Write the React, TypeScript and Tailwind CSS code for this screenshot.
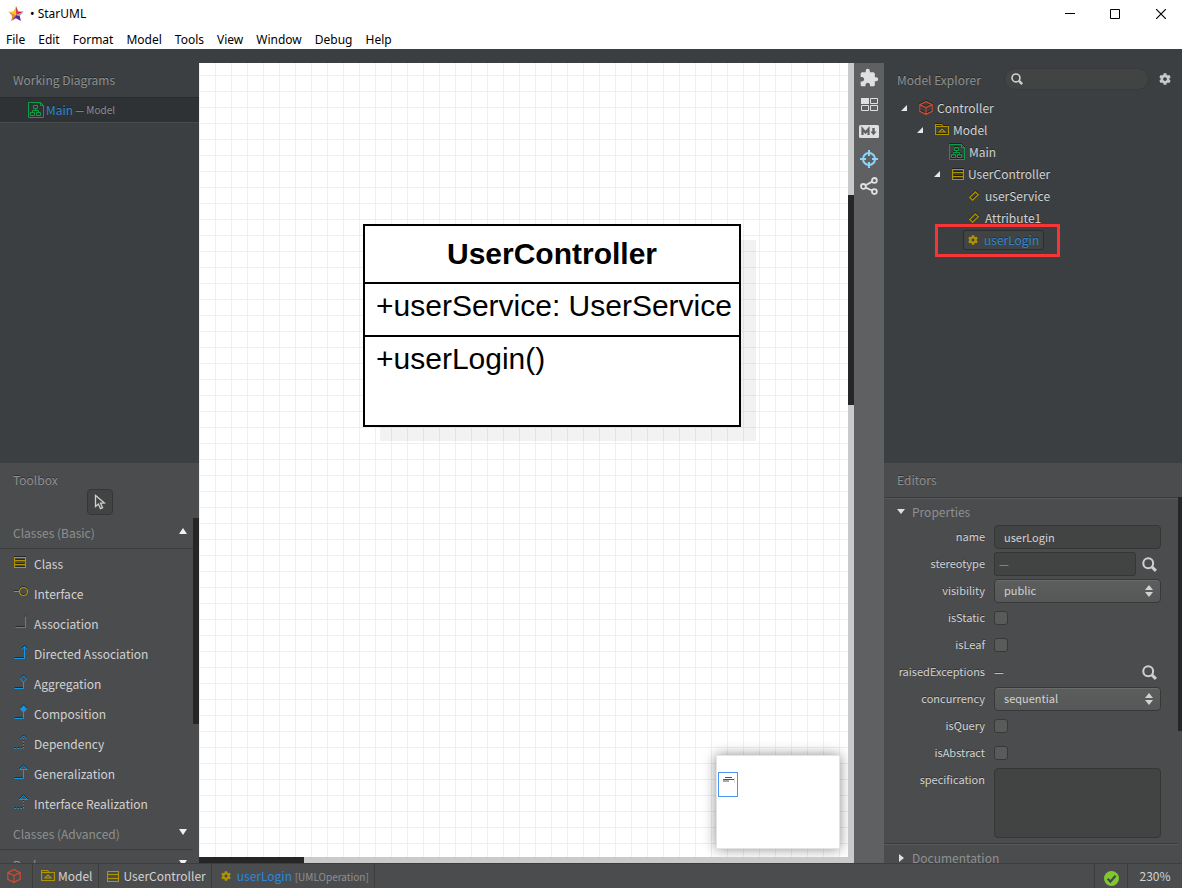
import { ReactNode, useState } from "react";
import { FaCog } from "react-icons/fa";
import { MdExtension } from "react-icons/md";

const menus = [
  "File",
  "Edit",
  "Format",
  "Model",
  "Tools",
  "View",
  "Window",
  "Debug",
  "Help",
];

const Logo = () => (
  <svg width="16" height="16" viewBox="0 0 16 16">
    <path d="M8 0 L8 9 L0.5 5.8 L5.6 5.4 Z" fill="#fcc21b" />
    <path d="M0.5 5.8 L8 9 L3.2 15 L4.2 10 Z" fill="#f08a1c" />
    <path d="M8 0 L10.4 5.4 L8 9 Z" fill="#d8433a" />
    <path d="M10.4 5.4 L15.6 5.8 L8 9 Z" fill="#c2183c" />
    <path d="M15.6 5.8 L11.8 10 L8 9 Z" fill="#a9a3a8" />
    <path d="M11.8 10 L12.8 15 L8 12.2 L8 9 Z" fill="#4b2aa0" />
    <path d="M8 9 L8 12.2 L3.2 15 Z" fill="#6a3fb5" />
  </svg>
);

const DiagramIcon = () => (
  <svg
    width="16"
    height="16"
    viewBox="0 0 16 16"
    fill="none"
    stroke="#0e9c46"
    className="shrink-0"
  >
    <path d="M0.5 0.5 H12.5 L15.5 3.5 V15.5 H0.5 Z M12.5 0.5 V3.5 H15.5" />
    <path d="M5.5 3.5 H9.5 V6.5 H5.5 Z M2.5 10.5 H6.5 V13.5 H2.5 Z M8.5 10.5 H12.5 V13.5 H8.5 Z M7.5 6.5 V8.5 M4.5 10.5 V8.5 H10.5 V10.5" />
  </svg>
);

const ProjectIcon = () => (
  <svg
    width="14"
    height="14"
    viewBox="0 0 14 14"
    fill="none"
    stroke="#cf4a30"
    strokeWidth="1.2"
    className="shrink-0"
  >
    <path d="M7 0.6 L13.2 3.6 V10.4 L7 13.4 L0.8 10.4 V3.6 Z M0.8 3.6 L7 6.6 L13.2 3.6 M7 6.6 V13.4" />
  </svg>
);

const PackageIcon = () => (
  <svg
    width="14"
    height="12"
    viewBox="0 0 14 12"
    fill="none"
    stroke="#b09500"
    strokeWidth="1.2"
    className="shrink-0"
  >
    <path d="M0.5 10.5 V0.5 H6.5 L8 2.5 H13.5 V10.5 Z M0.5 2.5 H8" />
    <path d="M4 8 L7 5 L10 8 Z" />
  </svg>
);

const ClassIcon = () => (
  <svg
    width="12"
    height="11"
    viewBox="0 0 12 11"
    fill="none"
    stroke="#b09500"
    strokeWidth="1.2"
    className="shrink-0"
  >
    <path d="M0.5 0.5 H11.5 V10.5 H0.5 Z M0.5 3.5 H11.5 M0.5 7.5 H11.5" />
  </svg>
);

const AttributeIcon = () => (
  <svg
    width="10"
    height="10"
    viewBox="0 0 10 10"
    fill="none"
    stroke="#b09500"
    strokeWidth="1.2"
    className="shrink-0"
  >
    <path d="M6.4 0.8 L9.2 3.6 L3.6 9.2 L0.8 6.4 Z" />
  </svg>
);

const OperationIcon = () => (
  <FaCog size={10} color="#b09500" className="shrink-0" />
);

const SearchIcon = ({ size }: { size: number }) => (
  <svg
    width={size}
    height={size}
    viewBox="0 0 14 14"
    fill="none"
    stroke="#d0d0d0"
    className="shrink-0"
  >
    <circle cx="5.8" cy="5.8" r="4.6" strokeWidth="1.9" />
    <path d="M9.3 9.3 L13 13" strokeWidth="2.8" />
  </svg>
);

const Edge = ({ dashed, children }: { dashed?: boolean; children?: ReactNode }) => (
  <svg width="14" height="14" viewBox="0 0 14 14" fill="none" stroke="#1697e0">
    <path
      d="M0.5 13.5 H9.5 V3"
      strokeDasharray={dashed ? "1.5 1.5" : undefined}
    />
    {children}
  </svg>
);

const tools = [
  { name: "Class", icon: <ClassIcon /> },
  {
    name: "Interface",
    icon: (
      <svg width="14" height="14" viewBox="0 0 14 14" fill="none" stroke="#b09500">
        <circle cx="9.5" cy="6.5" r="4" strokeWidth="1.2" />
        <path d="M0 6.5 H5.5" />
      </svg>
    ),
  },
  {
    name: "Association",
    icon: (
      <svg width="14" height="14" viewBox="0 0 14 14" fill="none" stroke="#1697e0">
        <path d="M1.5 12.5 H11.5 V1.5" />
      </svg>
    ),
  },
  {
    name: "Directed Association",
    icon: (
      <svg width="14" height="14" viewBox="0 0 14 14" fill="none" stroke="#1697e0">
        <path d="M0.5 13.5 H10.5 V1.5 M7.5 4.5 L10.5 1.5 L13.5 4.5" />
      </svg>
    ),
  },
  {
    name: "Aggregation",
    icon: (
      <Edge>
        <path d="M9.5 0.7 L12.5 4 L9.5 7.3 L6.5 4 Z" fill="#4b4c4e" />
      </Edge>
    ),
  },
  {
    name: "Composition",
    icon: (
      <Edge>
        <path d="M9.5 0.7 L12.5 4 L9.5 7.3 L6.5 4 Z" fill="#1697e0" />
      </Edge>
    ),
  },
  {
    name: "Dependency",
    icon: (
      <Edge dashed>
        <path d="M6.5 4 L9.5 1 L12.5 4" />
      </Edge>
    ),
  },
  {
    name: "Generalization",
    icon: (
      <Edge>
        <path d="M5.5 4.5 L9.5 0.8 L13.5 4.5 Z" fill="#4b4c4e" />
      </Edge>
    ),
  },
  {
    name: "Interface Realization",
    icon: (
      <Edge dashed>
        <path d="M5.5 4.5 L9.5 0.8 L13.5 4.5 Z" fill="#4b4c4e" />
      </Edge>
    ),
  },
];

const TitleBar = () => (
  <header className="shrink-0 bg-white text-black font-['Noto_Sans',sans-serif] text-xs">
    <div className="flex h-[27px] items-center pl-2">
      <Logo />
      <h1 className="flex-1 pl-1.5">• StarUML</h1>
      <button aria-label="Minimize" className="flex w-10 justify-center">
        <svg width="10" height="11" viewBox="0 0 10 11" stroke="#000">
          <path d="M0 5.5 H10" />
        </svg>
      </button>
      <button aria-label="Maximize" className="flex w-[50px] justify-center">
        <svg width="10" height="10" viewBox="0 0 10 10" stroke="#000" fill="none">
          <path d="M0.5 0.5 H9.5 V9.5 H0.5 Z" />
        </svg>
      </button>
      <button aria-label="Close" className="flex w-[42px] justify-center">
        <svg width="10" height="10" viewBox="0 0 10 10" stroke="#000" strokeWidth="1.2">
          <path d="M0 0 L10 10 M10 0 L0 10" />
        </svg>
      </button>
    </div>
    <nav className="flex h-[22px] items-center gap-[13px] pt-[3px] pl-1.5">
      {menus.map((menu) => (
        <button key={menu}>{menu}</button>
      ))}
    </nav>
  </header>
);

const WorkingDiagrams = () => (
  <section className="min-h-0 flex-1 bg-[#3b3f41] pt-3.5">
    <h2 className="flex h-[34px] items-center pl-[13px] text-[#8e9091]">
      Working Diagrams
    </h2>
    <a
      href="#main"
      className="flex h-[26px] items-center border-y border-t-[#292b2d] border-b-[#484b4d] bg-[#2f3234] pl-7"
    >
      <DiagramIcon />
      <span className="pl-0.5 text-[#2b87d8]">Main</span>
      <span className="pl-0.5 text-[10px] text-[#8e9091]">— Model</span>
    </a>
  </section>
);

const GroupHeader = ({ name, open }: { name: string; open?: boolean }) => (
  <button className="flex h-[31px] w-full items-center justify-between border-b border-[#3c3d3f] pr-1.5 pb-px pl-[13px] text-[#8e9091]">
    {name}
    <svg width="8" height="6" viewBox="0 0 8 6" fill="#f0f0f0" className="mb-[3px]">
      <path d={open ? "M0 6 L4 0 L8 6 Z" : "M0 0 L4 6 L8 0 Z"} />
    </svg>
  </button>
);

const Toolbox = () => (
  <section className="flex h-100 shrink-0 flex-col bg-[#4b4c4e]">
    <h2 className="flex h-[26px] items-center pt-2 pl-[13px] text-[#8e9091]">
      Toolbox
    </h2>
    <button
      aria-label="Select"
      className="mx-auto flex size-[26px] items-center justify-center rounded border border-[#353637] bg-[#424444]"
    >
      <svg width="12" height="16" viewBox="0 0 12 16" fill="none" stroke="#d0d0d0" strokeWidth="1.3">
        <path d="M1.5 1.5 V12.5 L4.3 10 L6.5 14.6 L8.6 13.6 L6.5 9.2 L10.5 9 Z" />
      </svg>
    </button>
    <div className="mt-[3px] flex min-h-0 flex-1 overflow-hidden">
      <div className="flex-1">
        <GroupHeader name="Classes (Basic)" open />
        <ul>
          {tools.map((tool) => (
            <li key={tool.name}>
              <button className="flex h-[30px] w-full items-center pb-px pl-3.5 text-[#d2d2d2]">
                <span className="flex w-5 pb-[3px] drop-shadow-[0_-1px_0_rgba(0,0,0,0.45)]">
                  {tool.icon}
                </span>
                {tool.name}
              </button>
            </li>
          ))}
        </ul>
        <GroupHeader name="Classes (Advanced)" />
        <GroupHeader name="Packages" />
      </div>
      <div className="w-1.5">
        <div className="h-[206px] bg-[#262626]" />
      </div>
    </div>
  </section>
);

const Canvas = () => (
  <main className="flex min-w-0 flex-1 flex-col bg-[#c9cbcb]">
    <div className="flex min-h-0 flex-1">
      <div className="relative flex-1 overflow-hidden bg-white bg-[linear-gradient(to_right,#efefef_1px,transparent_1px),linear-gradient(to_bottom,#efefef_1px,transparent_1px)] bg-size-[16px_16px] bg-position-[0_12px] font-['Liberation_Sans',Arial,sans-serif] text-[30px] leading-[34px] text-black [text-shadow:none]">
        <article className="absolute top-[161px] left-[164px] w-[378px] border-2 border-black bg-white shadow-[16px_15px_0_-1px_rgba(0,0,0,0.05)]">
          <h3 className="h-14 pt-[11px] text-center font-bold">
            UserController
          </h3>
          <p className="h-[53px] border-t-2 border-black pt-[5px] pl-[11px] whitespace-nowrap">
            +userService: UserService
          </p>
          <p className="h-[90px] border-t-2 border-black pt-[5px] pl-[11px]">
            +userLogin()
          </p>
        </article>
        <div className="absolute right-2 bottom-2 h-[94px] w-[124px] border border-[#e4e4e4] bg-white shadow-[0_0_12px_rgba(0,0,0,0.45)]">
          <div className="mt-4 ml-px h-[25px] w-5 border border-[#4a94f7] pt-1 pl-1">
            <svg width="12" height="7" viewBox="0 0 12 7">
              <path d="M2 0.5 H9 M0 2.5 H11 M0 4 H6" stroke="#555" />
              <path d="M11.5 1 V6" stroke="#ddd" />
            </svg>
          </div>
        </div>
      </div>
      <div className="w-1.5 pt-[132px]">
        <div className="h-[210px] bg-[#262626]" />
      </div>
    </div>
    <div className="h-1.5">
      <div className="h-full w-[105px] bg-[#262626]" />
    </div>
  </main>
);

const ToolStrip = () => (
  <aside className="flex w-[30px] shrink-0 flex-col items-center bg-[#5f6062] pt-px text-[#e0e0e0]">
    <button aria-label="Extensions" className="flex h-[27px] items-center">
      <MdExtension size={20} />
    </button>
    <button aria-label="Layout" className="flex h-[27px] items-center">
      <svg width="17" height="13" viewBox="0 0 17 13" fill="none" stroke="currentColor">
        <path d="M0 0 H8 V6 H0 Z" fill="currentColor" stroke="none" />
        <path d="M9.5 0.5 H16.5 V5.5 H9.5 Z M0.5 7.5 H7.5 V12.5 H0.5 Z M9.5 7.5 H16.5 V12.5 H9.5 Z" />
      </svg>
    </button>
    <button aria-label="Markdown" className="flex h-[27px] items-center">
      <svg width="20" height="13" viewBox="0 0 20 13" fill="none" stroke="#5f6062">
        <rect width="20" height="13" rx="1.5" fill="currentColor" stroke="none" />
        <path d="M3.5 10 V4 L6.5 7.5 L9.5 4 V10" strokeWidth="2.2" />
        <path d="M14.5 3 V7" strokeWidth="2.4" />
        <path d="M11.4 6.4 H17.6 L14.5 10.2 Z" fill="#5f6062" stroke="none" />
      </svg>
    </button>
    <button aria-label="Minimap" className="flex h-[27px] items-center text-[#8ed4fa]">
      <svg width="18" height="18" viewBox="0 0 18 18" fill="none" stroke="currentColor" strokeWidth="2">
        <circle cx="9" cy="9" r="6" />
        <path d="M9 0 V6 M9 12 V18 M0 9 H6 M12 9 H18" />
      </svg>
    </button>
    <button aria-label="Relationships" className="flex h-[27px] items-center">
      <svg width="18" height="18" viewBox="0 0 18 18" fill="none" stroke="currentColor" strokeWidth="1.8">
        <circle cx="3.4" cy="9.4" r="2.4" />
        <circle cx="14.4" cy="3.4" r="2.4" />
        <circle cx="14.4" cy="14.6" r="2.4" />
        <path d="M5.6 8.2 L12.2 4.6 M5.6 10.6 L12.2 13.5" />
      </svg>
    </button>
  </aside>
);

const TreeRow = ({
  className,
  parent,
  icon,
  name,
}: {
  className: string;
  parent?: boolean;
  icon: ReactNode;
  name: string;
}) => (
  <li className={`flex h-[22px] items-center ${className}`}>
    {parent && (
      <svg width="6" height="6" viewBox="0 0 6 6" fill="#e8e8e8" className="mr-3">
        <path d="M6 0 V6 H0 Z" />
      </svg>
    )}
    <span className="drop-shadow-[0_-1px_0_rgba(0,0,0,0.45)]">{icon}</span>
    <span className="pl-1">{name}</span>
  </li>
);

const ModelExplorer = () => (
  <section className="min-h-0 flex-1 bg-[#3b3f41] pt-3.5 text-[#d2d2d2]">
    <div className="flex h-[34px] items-center pr-[11px] pl-[13px]">
      <h2 className="flex-1 text-[#8e9091]">Model Explorer</h2>
      <label className="mb-0.5 flex h-[22px] w-[145px] items-center rounded-full border border-[#383a3b] bg-[#424444] pl-1.5">
        <SearchIcon size={12} />
        <input aria-label="Search" className="w-full px-1 outline-none" />
      </label>
      <button aria-label="Settings" className="mb-0.5 ml-2.5">
        <FaCog size={12} color="#c8c8c8" />
      </button>
    </div>
    <ul>
      <TreeRow className="pl-[17px]" parent icon={<ProjectIcon />} name="Controller" />
      <TreeRow className="pl-[33px]" parent icon={<PackageIcon />} name="Model" />
      <TreeRow className="pl-[65px]" icon={<DiagramIcon />} name="Main" />
      <TreeRow className="pl-[50px]" parent icon={<ClassIcon />} name="UserController" />
      <TreeRow className="gap-0.5 pl-[85px]" icon={<AttributeIcon />} name="userService" />
      <TreeRow className="gap-0.5 pl-[85px]" icon={<AttributeIcon />} name="Attribute1" />
    </ul>
    {/* Highlight around the selected operation */}
    <div className="-mt-[5px] ml-[51px] flex h-[33px] w-[125px] items-center border-[3px] border-[#f73535] pb-0.5 pl-[25px]">
      <div className="flex h-5 items-center gap-1.5 rounded-[3px] border border-[#2b2d2e] bg-[#424444] px-1">
        <OperationIcon />
        <span className="text-[#2b87d8]">userLogin</span>
      </div>
    </div>
  </section>
);

const Field = ({
  id,
  children,
}: {
  id: string;
  children: ReactNode;
}) => (
  <div className="flex min-h-[27px] items-start">
    <label htmlFor={id} className="w-[101px] text-right leading-[22px]">
      {id}
    </label>
    <div className="ml-[9px] flex min-h-6 flex-1 items-center">{children}</div>
  </div>
);

const Check = ({ id }: { id: string }) => (
  <Field id={id}>
    <input
      id={id}
      type="checkbox"
      className="size-3.5 appearance-none rounded-[3px] border border-[#373939] bg-[#595b5b] checked:bg-[#2b87d8]"
    />
  </Field>
);

const Select = ({ id, options }: { id: string; options: string[] }) => (
  <Field id={id}>
    <div className="relative flex-1">
      <select
        id={id}
        className="h-6 w-full appearance-none rounded border border-[#373939] bg-linear-to-b from-[#5c5e5e] to-[#565858] px-[9px] pb-0.5 shadow-[inset_0_1px_0_#6a6c6c]"
      >
        {options.map((option) => (
          <option key={option}>{option}</option>
        ))}
      </select>
      <svg
        width="8"
        height="12"
        viewBox="0 0 8 12"
        fill="#d2d2d2"
        className="pointer-events-none absolute top-1.5 right-2"
      >
        <path d="M4 0 L8 5 H0 Z M0 7 H8 L4 12 Z" />
      </svg>
    </div>
  </Field>
);

const Editors = () => {
  const [name, setName] = useState("userLogin");

  return (
    <section className="flex h-100 shrink-0 flex-col overflow-hidden bg-[#4b4c4e]">
      <h2 className="flex h-[34px] shrink-0 items-center pl-[13px] text-[#8e9091]">
        Editors
      </h2>
      <div className="flex min-h-0 flex-1">
        <div className="min-w-0 flex-1 text-xs text-[#d2d2d2]">
          <button className="flex h-7 w-full items-center border-t border-[#3a3b3c] pl-[13px] text-[#8e9091] shadow-[inset_0_1px_0_#57595a]">
            <svg width="8" height="5" viewBox="0 0 8 5" fill="#e0e0e0" className="mr-[7px]">
              <path d="M0 0 H8 L4 5 Z" />
            </svg>
            Properties
          </button>
          <div className="pr-[17px] text-[11px]">
            <Field id="name">
              <input
                id="name"
                value={name}
                onChange={(event) => setName(event.target.value)}
                className="h-6 w-full rounded border border-[#353737] bg-[#424444] px-[9px]"
              />
            </Field>
            <Field id="stereotype">
              <input
                id="stereotype"
                placeholder="—"
                className="h-6 min-w-0 flex-1 rounded-[3px] border border-[#353737] bg-[#424444] px-1 placeholder:text-[#8e9091]"
              />
              <button aria-label="Find stereotype" className="mr-1 ml-1.5">
                <SearchIcon size={15} />
              </button>
            </Field>
            <Select id="visibility" options={["public", "protected", "private", "package"]} />
            <Check id="isStatic" />
            <Check id="isLeaf" />
            <Field id="raisedExceptions">
              <output id="raisedExceptions" className="flex-1">
                —
              </output>
              <button aria-label="Find exceptions" className="mr-1">
                <SearchIcon size={15} />
              </button>
            </Field>
            <Select id="concurrency" options={["sequential", "guarded", "concurrent"]} />
            <Check id="isQuery" />
            <Check id="isAbstract" />
            <Field id="specification">
              <textarea
                id="specification"
                className="h-[70px] w-full resize-none rounded border border-[#353737] bg-[#424444] px-[9px]"
              />
            </Field>
          </div>
          <button className="mt-[5px] flex h-7 w-full items-center border-t border-[#3a3b3c] pl-[15px] text-[#8e9091] shadow-[inset_0_1px_0_#57595a]">
            <svg width="5" height="8" viewBox="0 0 5 8" fill="#e0e0e0" className="mr-2">
              <path d="M0 0 V8 L5 4 Z" />
            </svg>
            Documentation
          </button>
        </div>
        <div className="w-1">
          <div className="h-[234px] bg-[#262626]" />
        </div>
      </div>
    </section>
  );
};

const StatusBar = () => (
  <footer className="flex h-[25px] shrink-0 border-t border-[#3c3d3f] bg-[#4b4c4e] text-[#d2d2d2] [text-shadow:0_-1px_0_rgba(0,0,0,0.35)] *:flex *:items-center *:border-[#3c3d3f]">
    <button aria-label="Project" className="w-[33px] justify-center border-r pr-1">
      <ProjectIcon />
    </button>
    <button className="gap-[3px] border-r pr-[5px] pl-2">
      <PackageIcon />
      Model
    </button>
    <button className="gap-[5px] border-r pr-[5px] pl-2">
      <ClassIcon />
      UserController
    </button>
    <button className="gap-1.5 border-r pr-[5px] pl-[9px]">
      <OperationIcon />
      <span className="text-[#2b87d8]">
        userLogin{" "}
        <span className="text-[10px] text-[#8e9091]">[UMLOperation]</span>
      </span>
    </button>
    <div className="flex-1" />
    <button aria-label="Validation passed" className="w-[34px] justify-center border-x pt-1">
      <svg width="15" height="15" viewBox="0 0 15 15">
        <circle cx="7.5" cy="7.5" r="7.5" fill="#7fc92f" />
        <path d="M3.6 7.8 L6.4 10.6 L11.6 4.8" fill="none" stroke="#45474a" strokeWidth="2.2" />
      </svg>
    </button>
    <button className="w-[54px] justify-center">230%</button>
  </footer>
);

export default function App() {
  return (
    <div className="flex h-screen flex-col overflow-hidden bg-[#3b3f41] font-['Noto_Sans_CJK_SC',sans-serif] text-xs">
      <TitleBar />
      <div className="flex min-h-0 flex-1 [text-shadow:0_-1px_0_rgba(0,0,0,0.35)]">
        <div className="flex w-[199px] shrink-0 flex-col">
          <WorkingDiagrams />
          <Toolbox />
        </div>
        <div className="flex min-w-0 flex-1 pt-3.5">
          <Canvas />
          <ToolStrip />
        </div>
        <div className="flex w-[298px] shrink-0 flex-col">
          <ModelExplorer />
          <Editors />
        </div>
      </div>
      <StatusBar />
    </div>
  );
}
